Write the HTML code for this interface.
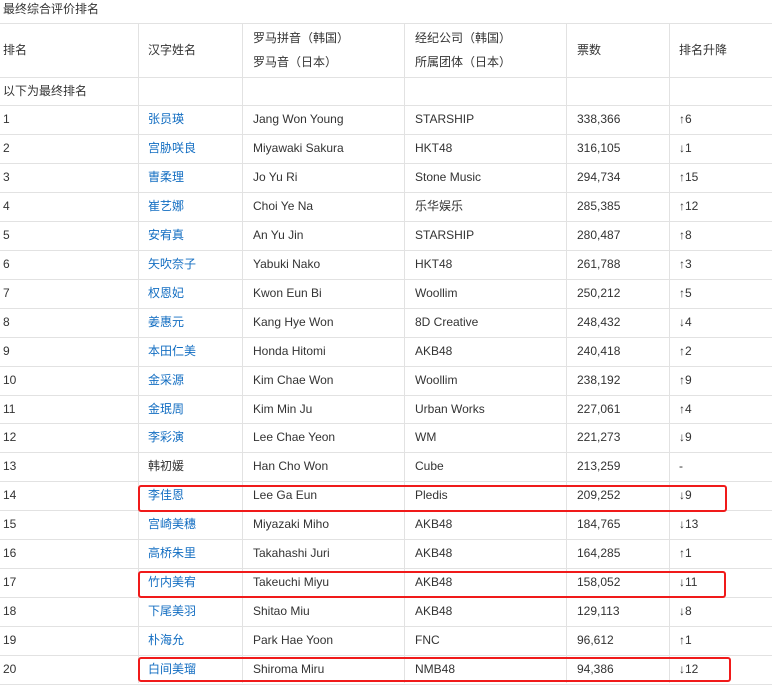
<!DOCTYPE html>
<html><head><meta charset="utf-8"><style>
body{margin:0;width:772px;height:683px;overflow:hidden;background:#fff;font-family:"Liberation Sans","Noto Sans CJK SC",sans-serif;font-size:12px;color:#333;position:relative}
.t{position:absolute;left:3px;top:1px;font-size:12px;line-height:17px}
.h{position:absolute;left:0;width:772px;height:1px;background:#e2e2e2}
.v{position:absolute;top:23px;bottom:0;width:1px;background:#e2e2e2}
.r{position:absolute;left:0;width:772px;height:29px;line-height:29px}
.r span,.hd span{position:absolute;white-space:nowrap}
.c1{left:3px}.c2{left:148px;color:#136ec2}.c3{left:253px}.c4{left:415px}.c5{left:577px}.c6{left:679px}
.k{color:#333!important}
.box{position:absolute;border:2.5px solid #f01a1a;border-radius:3px;box-sizing:border-box}
</style></head><body>
<div class="t">最终综合评价排名</div>
<div class="h" style="top:23px"></div>
<div class="h" style="top:77px"></div>
<div class="h" style="top:105px"></div>
<div class="v" style="left:138px"></div><div class="v" style="left:242px"></div><div class="v" style="left:404px"></div><div class="v" style="left:566px"></div><div class="v" style="left:669px"></div>
<div class="hd" style="position:absolute;top:23px;left:0;width:772px;height:54px;line-height:24px">
<span class="c1" style="top:15px">排名</span><span style="left:148px;top:15px">汉字姓名</span>
<span style="left:253px;top:3px">罗马拼音（韩国）</span><span style="left:253px;top:27px">罗马音（日本）</span>
<span style="left:415px;top:3px">经纪公司（韩国）</span><span style="left:415px;top:27px">所属团体（日本）</span>
<span style="left:577px;top:15px">票数</span><span style="left:679px;top:15px">排名升降</span></div>
<div class="r" style="top:77px;height:28px;line-height:28px"><span class="c1">以下为最终排名</span></div>
<div id="rows"></div>
<div class="box" style="left:138px;top:485px;width:589px;height:27px"></div>
<div class="box" style="left:138px;top:571px;width:588px;height:27px"></div>
<div class="box" style="left:138px;top:657px;width:593px;height:25px"></div>
<script>
var d=[["张员瑛","Jang Won Young","STARSHIP","338,366","↑6"],["宫胁咲良","Miyawaki Sakura","HKT48","316,105","↓1"],["曺柔理","Jo Yu Ri","Stone Music","294,734","↑15"],["崔艺娜","Choi Ye Na","乐华娱乐","285,385","↑12"],["安宥真","An Yu Jin","STARSHIP","280,487","↑8"],["矢吹奈子","Yabuki Nako","HKT48","261,788","↑3"],["权恩妃","Kwon Eun Bi","Woollim","250,212","↑5"],["姜惠元","Kang Hye Won","8D Creative","248,432","↓4"],["本田仁美","Honda Hitomi","AKB48","240,418","↑2"],["金采源","Kim Chae Won","Woollim","238,192","↑9"],["金珉周","Kim Min Ju","Urban Works","227,061","↑4"],["李彩演","Lee Chae Yeon","WM","221,273","↓9"],["韩初媛","Han Cho Won","Cube","213,259","-"],["李佳恩","Lee Ga Eun","Pledis","209,252","↓9"],["宫崎美穗","Miyazaki Miho","AKB48","184,765","↓13"],["高桥朱里","Takahashi Juri","AKB48","164,285","↑1"],["竹内美宥","Takeuchi Miyu","AKB48","158,052","↓11"],["下尾美羽","Shitao Miu","AKB48","129,113","↓8"],["朴海允","Park Hae Yoon","FNC","96,612","↑1"],["白间美瑠","Shiroma Miru","NMB48","94,386","↓12"]];
var h="";d.forEach(function(r,i){var t=105+i*28.95;h+='<div class="r" style="top:'+t+'px"><span class="c1">'+(i+1)+'</span><span class="c2'+(i==12?' k':'')+'">'+r[0]+'</span><span class="c3">'+r[1]+'</span><span class="c4">'+r[2]+'</span><span class="c5">'+r[3]+'</span><span class="c6">'+r[4]+'</span></div><div class="h" style="top:'+(t+28.95)+'px"></div>';});
document.getElementById("rows").outerHTML=h;
</script>
</body></html>
